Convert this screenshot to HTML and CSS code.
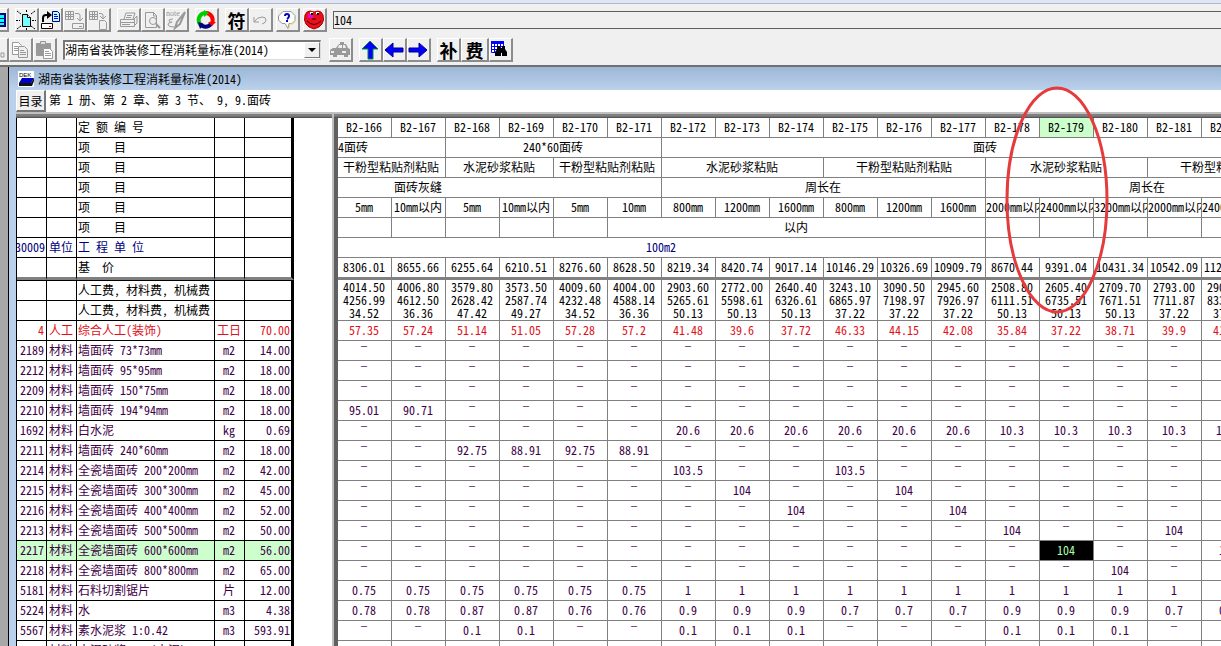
FILE: index.html
```html
<!DOCTYPE html>
<html lang="zh-CN">
  <head>
    <meta charset="UTF-8" />
    <meta name="viewport" content="width=device-width, initial-scale=1.0" />
    <title>湖南省装饰装修工程消耗量标准(2014)</title>
    <link rel="stylesheet" href="styles.css">
  </head>

  <body>
    <div class="menu-edge"></div>
    <div class="toolbars">
      <div class="toolbar">
        <button class="tool cut" aria-label="表格">
          <svg viewBox="0 0 20 20"><path fill="#000080" d="M0 3h18v14H0z"/><path fill="#0ff" d="M0 5h16v3H0zM0 9h16v3H0zM0 13h16v2H0z"/></svg>
        </button>
        <div class="group">
          <button class="tool" aria-label="新建">
            <svg viewBox="0 0 20 20"><path fill="#7ff" stroke="#000" d="M6.500 4.500h5l3 3v9h-8z"/><path fill="#fff" stroke="#000" d="M11.500 4.500v3h3"/><path stroke="#000" stroke-dasharray="2 1" d="M1 1l4 3M19 1l-4 3M1 19l4-3M19 19l-4-3M0 10.500h4M16 10.500h4M10.500 0v3M10.500 18v2"/></svg>
          </button>
          <button class="tool" aria-label="打开">
            <svg viewBox="0 0 20 20"><path fill="none" stroke="#000" stroke-width="2" d="M3 12V8q0-3 3-3h2"/><path d="M7 1l5 4-5 4z"/><path fill="#bff" stroke="#000080" d="M12.500 1.500h5l2 2v8h-7z"/><path stroke="#00f" d="M14 4.500h3M14 6.500h4M14 8.500h4"/><path fill="#fff" stroke="#000" d="M1.500 13.500h11v5h-11z"/><path stroke="#f00" d="M9 16.500h2"/></svg>
          </button>
          <button class="tool off" aria-label="导入">
            <svg viewBox="0 0 20 20"><path d="M1.500 1.500h8v8h-8zM1 4.500h8M1 6.500h8M4.500 1v8M6.500 1v8M11 3.500h3q2 0 2 2v5M13 8l3 3 3-3M8.500 13.500h11v5h-11zM15 16.500h3"/></svg>
          </button>
          <button class="tool off" aria-label="导出">
            <svg viewBox="0 0 20 20"><path d="M1.500 1.500h8v8h-8zM1 4.500h8M1 6.500h8M4.500 1v8M6.500 1v8M11 3.500h2q2 0 2 2v3M12 6l3 3 3-3M11.500 10.500h5l2 2v7h-7z"/></svg>
          </button>
        </div>
        <div class="group">
          <button class="tool off" aria-label="打印">
            <svg viewBox="0 0 20 20"><path d="M6 9l2-6h9l-2 6M2.500 9.500h14v7h-14zM2 12.500h14M16 9l3-3v7l-3 3M9 5.500h5M8 7.500h5M4 14.500h8"/></svg>
          </button>
          <button class="tool off" aria-label="预览">
            <svg viewBox="0 0 20 20"><path d="M3.500 2.500h8l3 3v12h-11zM11.500 2v4h3"/><circle cx="11" cy="11" r="3.500"/><path stroke-width="2" d="M14 14l4 4"/></svg>
          </button>
          <button class="tool off" aria-label="备注">
            <svg viewBox="0 0 20 20"><text x="0" y="6" class="note">note</text><path d="M7 9q-5 0-4 2t3 1q-5 1-4 3t6 2"/><path stroke-width="2" d="M19 2l-8 10-2 6 5-4 5-12"/></svg>
          </button>
        </div>
        <div class="group">
          <button class="tool" aria-label="循环">
            <svg viewBox="0 0 20 20"><g fill="none" stroke-width="4"><path stroke="#0c0" d="M4 14A7 7 0 0 1 9 3"/><path stroke="#f00" d="M10 3a7 7 0 0 1 6 10"/><path stroke="#000080" d="M15 14A7 7 0 0 1 4 14"/></g><path fill="#0c0" d="M8 0l5 3-5 4z"/><path fill="#f00" d="M12 12h8l-4 4z"/><path fill="#000080" d="M2 12l6 2-4 5z"/></svg>
          </button>
        </div>
        <div class="group">
          <button class="tool glyph">符</button>
          <button class="tool off" aria-label="撤销">
            <svg viewBox="0 0 20 20"><path d="M4 7v5h5M4 12q3-5 8-5 4 0 4 3t-4 4"/></svg>
          </button>
        </div>
        <div class="group near">
          <button class="tool" aria-label="帮助">
            <svg viewBox="0 0 20 20"><path fill="#fff" stroke="#999" d="M6 1.500h8l4 4v5l-3 3h-3l-1 5-3-5H5L1.500 10V6z"/><path fill="none" stroke="#dd8" d="M19 10l-3 4h-3l-1 4"/><path fill="none" stroke="#00c" stroke-width="2" d="M8 6q0-2 2-2t2 2-2 3M10 10v2"/></svg>
          </button>
          <button class="tool" aria-label="退出">
            <svg viewBox="0 0 20 20"><path fill="#e8101c" stroke="#a00" d="M3 2l3-1 4 1 4-1 3 1 2 3 .500 5-1.500 4-3 3-5 2-5-2-3-3L.500 10 1 5z"/><path fill="#e010d0" d="M4 4h5v4H4z"/><path fill="#fff" d="M6 2h3v2H6zM12 2h3v2h-3z"/><path d="M7 3h2v2H7zM13 3h2v2h-2z"/><path fill="none" stroke="#400" d="M3 11q7 7 14 0M8 9h4"/></svg>
          </button>
        </div>
        <input class="formula" type="text" value="104" aria-label="单元格内容" />
      </div>

      <div class="toolbar">
        <button class="tool off cut" aria-label="剪切">
          <svg viewBox="0 0 20 20"><path d="M4 2l8 11M13 13h3v4h-3z"/></svg>
        </button>
        <div class="group pull">
          <button class="tool off" aria-label="复制">
            <svg viewBox="0 0 20 20"><path fill="#fff" d="M2.500 2.500h6l3 3v9h-9zM4 6.500h4M4 8.500h5M4 10.500h5"/><path fill="#eee" d="M8.500 6.500h6l3 3v8h-9zM10 10.500h4M10 12.500h6M10 14.500h6"/></svg>
          </button>
          <button class="tool off" aria-label="粘贴">
            <svg viewBox="0 0 20 20"><path fill="#999" d="M2.500 3.500h14v12h-14z"/><path fill="#ddd" d="M6.500 1.500h5v3h-5z"/><path fill="#fff" d="M9.500 8.500h6l3 3v7h-9zM11 11.500h4M11 13.500h6M11 15.500h6"/></svg>
          </button>
        </div>
        <div class="combo">
          <select aria-label="标准">
            <option>湖南省装饰装修工程消耗量标准(2014)</option>
          </select>
          <span class="arrow"></span>
        </div>
        <button class="tool off" aria-label="机械">
          <svg viewBox="0 0 20 20"><path class="car" fill="#999" d="M10 2h4v2h2l2 4 2 1v6h-2v2h-4v-2H7v2H3v-2H0v-5l3-2h3l3-4h1z"/><path fill="#eee" class="car" d="M9 5h3v3H8zM13 5h2l1 3h-3zM1 11h3v2H1zM12 11h4v2h-4z"/></svg>
        </button>
        <div class="group">
          <button class="tool" aria-label="上"><svg viewBox="0 0 20 20"><path fill="#00f" stroke="#084" d="M10 1l8 8h-5v10H8V9H2z"/></svg></button>
          <button class="tool" aria-label="左"><svg viewBox="0 0 20 20"><path fill="#00f" stroke="#008" d="M1 10l8-7v5h10v4H9v5z"/></svg></button>
          <button class="tool" aria-label="右"><svg viewBox="0 0 20 20"><path fill="#00f" stroke="#008" d="M19 10l-8-7v5H1v4h10v5z"/></svg></button>
        </div>
        <div class="group">
          <button class="tool glyph">补</button>
          <button class="tool glyph wide">费</button>
          <button class="tool" aria-label="查找">
            <svg viewBox="0 0 20 20"><path fill="#fff" stroke="#00f" d="M1.500 1.500h12v11h-12zM1 6.500h12M1 9.500h12M4.500 3v10M7.500 3v10M10.500 3v10"/><path fill="#00f" d="M1 1h13v3H1z"/><path d="M7 6h3v2h2V6h3v3l2 3v4h-5v-4h-1v4H5v-4l2-3z"/></svg>
          </button>
        </div>
      </div>
    </div>

    <div class="mdi">
      <div class="window">
        <div class="title">
          <svg viewBox="0 0 16 16"><path fill="#fff" d="M0 0h16v16H0z"/><text x="1" y="6" class="dek">DEK</text><path fill="#00c" d="M4 7h12l-3 5H1z"/><path fill="#111" d="M1 12h12l3-5v3l-2 5H1z"/></svg>
          <span>湖南省装饰装修工程消耗量标准(2014)</span>
        </div>
        <div class="path">
          <button class="catalog">目录</button>
          <span>第 1 册、第 2 章、第 3 节、 9, 9.面砖</span>
        </div>
        <div class="panes">
          <div class="left">
            <table class="items">
              <colgroup><col class="c1"><col class="c2"><col class="c3"><col class="c4"><col class="c5"></colgroup>
              <thead></thead>
              <tbody></tbody>
            </table>
          </div>
          <div class="right">
            <table class="quota">
              <thead></thead>
              <tbody></tbody>
            </table>
          </div>
        </div>
      </div>
    </div>

    <svg class="mark" viewBox="0 0 104 228"><ellipse cx="52" cy="114" rx="50" ry="112"/></svg>

    <script src="script.js"></script>
  </body>
</html>
```
FILE: styles.css
```css
* {
  margin: 0;
  padding: 0;
  box-sizing: border-box;
}

body {
  display: flex;
  flex-direction: column;
  height: 100vh;
  overflow: hidden;
  position: relative;
  background: #f0f0f0;
}

body,
button,
input,
select {
  font-family: "Noto Sans Mono CJK SC", "Noto Sans CJK SC", monospace;
  font-size: 12px;
  line-height: 16px;
  color: #000;
}

.menu-edge {
  height: 4px;
  flex: none;
  background: #dfe5f2;
  border-bottom: 1px solid #b0b8cc;
}

.toolbars {
  flex: none;
  height: 63px;
  padding-top: 4px;
  border-bottom: 2px solid #707070;
}

.toolbar {
  display: flex;
  align-items: center;
  gap: 6px;
  height: 24px;
  margin-bottom: 6px;
}

.group {
  display: flex;
}

.near {
  gap: 3px;
  margin-left: -3px;
}

.tool {
  flex: none;
  width: 24px;
  height: 24px;
  background: #f0f0f0;
  border: 1px solid #fff;
  border-right: 2px solid #8c8c8c;
  border-bottom: 2px solid #8c8c8c;
}

.tool svg {
  display: block;
  width: 20px;
  height: 20px;
}

.cut {
  width: 9px;
  border-left: 0;
  overflow: hidden;
}

.cut svg {
  margin-left: -12px;
}

.pull {
  margin-left: -6px;
}

.off path,
.off circle {
  stroke: #999;
}

.off path:not([fill]),
.off circle {
  fill: none;
}

.off .car {
  stroke: none;
}

.note {
  font: 8px "Liberation Serif", serif;
  fill: #999;
}

.glyph {
  font-size: 18px;
  font-weight: bold;
  line-height: 18px;
}

.wide {
  width: 28px;
}

.formula {
  flex: 1;
  align-self: flex-start;
  height: 18px;
  margin-top: 3px;
  padding-bottom: 2px;
  background: #f0f0f0;
  border: 1px solid #606060;
  border-right: 0;
}

.combo {
  position: relative;
  width: 258px;
  height: 20px;
  margin-right: 2px;
}

.combo select {
  width: 100%;
  height: 20px;
  padding-bottom: 2px;
  appearance: none;
  background: #fff;
  border: 2px solid #777;
  border-right: 1px solid #ddd;
  border-bottom: 1px solid #ddd;
  border-radius: 0;
}

.arrow {
  position: absolute;
  top: 2px;
  right: 1px;
  width: 16px;
  height: 16px;
  background: #f0f0f0;
  border: 1px solid #fff;
  border-right-color: #777;
  border-bottom-color: #777;
  pointer-events: none;
}

.arrow::after {
  content: "";
  display: block;
  margin: 5px 3px;
  border: 4px solid transparent;
  border-top-color: #000;
  border-bottom: 0;
}

.mdi {
  flex: 1;
  min-height: 0;
  display: flex;
  padding-left: 8px;
  background: #a8a8a8;
}

.window {
  flex: 1;
  min-width: 0;
  display: flex;
  flex-direction: column;
  background: #fff;
  border-left: 1px solid #000;
}

.title {
  flex: none;
  display: flex;
  align-items: center;
  gap: 4px;
  height: 23px;
  padding-left: 9px;
  background: linear-gradient(#9cb7d6, #bbd1ec);
}

.title svg {
  width: 16px;
  height: 16px;
}

.dek {
  font: 6px "Liberation Sans", sans-serif;
}

.path,
.panes {
  border-left: 7px solid #b9d1ea;
}

.path {
  flex: none;
  display: flex;
  align-items: center;
  gap: 3px;
  height: 22px;
  white-space: pre;
}

.path span {
  padding-bottom: 2px;
}

.catalog {
  width: 30px;
  height: 22px;
  background: #f0f0f0;
  border: 1px solid #fff;
  border-right: 2px solid #777;
  border-bottom: 2px solid #777;
}

.panes {
  flex: 1;
  min-height: 0;
  display: flex;
}

.left,
.right {
  overflow: hidden;
  border-top: 2px solid #c0c0c0;
}

.left::before,
.right::before {
  content: "";
  display: block;
  height: 4px;
  background: linear-gradient(#808080 50%, #484848);
}

.left {
  flex: none;
  width: 316px;
}

.right {
  flex: 1;
  border-left: 2px solid #c0c0c0;
}

table {
  table-layout: fixed;
  border-collapse: separate;
  border-spacing: 0;
}

th,
td {
  height: 20px;
  padding: 0 1px 2px 0;
  line-height: 17px;
  font-weight: normal;
  text-align: center;
  white-space: pre;
  overflow: hidden;
  border-right: 1px solid #808080;
  border-bottom: 1px solid #808080;
}

thead tr:last-child th {
  height: 22px;
  border-bottom: 3px solid #808080;
}

tbody {
  color: #400048;
}

.items {
  width: 278px;
  border-left: 1px solid #000;
}

.c1,
.c2,
.c4 {
  width: 30px;
}

.c3 {
  width: 138px;
}

.c5 {
  width: 49px;
}

.items th,
.items td {
  border-color: #000;
}

.items thead tr:last-child th {
  border-bottom-color: #808080;
}

.items tbody tr:first-child td {
  height: 21px;
  border-top: 1px solid #000;
}

.items th:nth-child(3),
.items td:nth-child(3) {
  padding-left: 1px;
  text-align: left;
}

/* long codes lose their first digits, not the last */
.items th:first-child,
.items td:first-child {
  padding-right: 2px;
  text-align: right;
  direction: rtl;
}

.items th:last-child,
.items td:last-child {
  text-align: right;
  border-right: 3px solid #000;
}

.quota {
  width: 976px;
  border-left: 4px solid #606060;
}

.quota .fees td {
  height: 41px;
  padding-bottom: 1px;
  line-height: 13px;
}

.quota .dash {
  font-family: "Liberation Serif", serif;
  line-height: 8px;
  vertical-align: top;
}

.fees {
  color: #000;
}

.labor {
  color: #e01020;
}

.unit {
  color: #000080;
}

.quota .from-left {
  text-align: left;
}

.quota .joint {
  padding-left: 56px;
  text-align: left;
}

.picked td,
.quota .picked-col {
  background: #ccffcc;
}

.quota .current {
  color: #aaffaa;
  background: #000;
}

.mark {
  position: absolute;
  top: 86px;
  left: 1005px;
  width: 104px;
  height: 228px;
  pointer-events: none;
}

.mark ellipse {
  fill: none;
  stroke: #e43c3c;
  stroke-width: 3px;
}
```
FILE: script.js
```js
var itemHead = document.querySelector(".items thead");
var itemBody = document.querySelector(".items tbody");
var quotaHead = document.querySelector(".quota thead");
var quotaBody = document.querySelector(".quota tbody");

var COLS = 18;

// left header: code, type, name
var titles = [
  ["", "", "定 额 编 号"],
  ["", "", "项    目"],
  ["", "", "项    目"],
  ["", "", "项    目"],
  ["", "", "项    目"],
  ["", "", "项    目"],
  ["30009", "单位", "工 程 单 位", "unit"],
  ["", "", "基  价"],
];

// right header: [text, colspan, class]
var heads = [
  [],
  [["4面砖", 2, "from-left"], ["240*60面砖", 4], ["面砖", 12]],
  [["干粉型粘贴剂粘贴", 2], ["水泥砂浆粘贴", 2], ["干粉型粘贴剂粘贴", 2], ["水泥砂浆粘贴", 3],
   ["干粉型粘贴剂粘贴", 3], ["水泥砂浆粘贴", 3], ["干粉型粘贴剂粘贴", 3]],
  [["面砖灰缝", 6, "joint"], ["周长在", 6], ["周长在", 6]],
  ["5mm", "10mm以内", "5mm", "10mm以内", "5mm", "10mm", "800mm", "1200mm", "1600mm", "800mm", "1200mm",
   "1600mm", "2000mm以内", "2400mm以内", "3200mm以内", "2000mm以内", "2400mm以内", ""],
  ["", "", "", "", "", ["以内", 7], "", "", "", "", "", ""],
  [["100m2", 12, "unit"], ["", 6]],
  ["8306.01", "8655.66", "6255.64", "6210.51", "8276.60", "8628.50", "8219.34", "8420.74", "9017.14",
   "10146.29", "10326.69", "10909.79", "8670.44", "9391.04", "10431.34", "10542.09", "11272.81", ""],
];
for (var n = 166; n < 166 + COLS; n++) {
  heads[0].push(["B2-" + n, 1, n == 179 ? "picked-col" : ""]);
}

var fees = [
  ["4014.50", "4256.99", "34.52"], ["4006.80", "4612.50", "36.36"], ["3579.80", "2628.42", "47.42"],
  ["3573.50", "2587.74", "49.27"], ["4009.60", "4232.48", "34.52"], ["4004.00", "4588.14", "36.36"],
  ["2903.60", "5265.61", "50.13"], ["2772.00", "5598.61", "50.13"], ["2640.40", "6326.61", "50.13"],
  ["3243.10", "6865.97", "37.22"], ["3090.50", "7198.97", "37.22"], ["2945.60", "7926.97", "37.22"],
  ["2508.80", "6111.51", "50.13"], ["2605.40", "6735.51", "50.13"], ["2709.70", "7671.51", "50.13"],
  ["2793.00", "7711.87", "37.22"], ["2900.80", "8334.79", "37.22"], [],
];

// code, type, name, unit, price, values ("–" when not listed)
var items = [
  ["4", "人工", "综合人工(装饰)", "工日", "70.00", [57.35, 57.24, 51.14, 51.05, 57.28, 57.2, 41.48, 39.6,
    37.72, 46.33, 44.15, 42.08, 35.84, 37.22, 38.71, 39.9, 41.44]],
  ["2189", "材料", "墙面砖 73*73mm", "m2", "14.00", []],
  ["2212", "材料", "墙面砖 95*95mm", "m2", "18.00", []],
  ["2209", "材料", "墙面砖 150*75mm", "m2", "18.00", []],
  ["2210", "材料", "墙面砖 194*94mm", "m2", "18.00", { 0: 95.01, 1: 90.71 }],
  ["1692", "材料", "白水泥", "kg", "0.69", { 6: 20.6, 7: 20.6, 8: 20.6, 9: 20.6, 10: 20.6, 11: 20.6,
    12: 10.3, 13: 10.3, 14: 10.3, 15: 10.3, 16: 10.3 }],
  ["2211", "材料", "墙面砖 240*60mm", "m2", "18.00", { 2: 92.75, 3: 88.91, 4: 92.75, 5: 88.91 }],
  ["2214", "材料", "全瓷墙面砖 200*200mm", "m2", "42.00", { 6: 103.5, 9: 103.5 }],
  ["2215", "材料", "全瓷墙面砖 300*300mm", "m2", "45.00", { 7: 104, 10: 104 }],
  ["2216", "材料", "全瓷墙面砖 400*400mm", "m2", "52.00", { 8: 104, 11: 104 }],
  ["2213", "材料", "全瓷墙面砖 500*500mm", "m2", "50.00", { 12: 104, 15: 104 }],
  ["2217", "材料", "全瓷墙面砖 600*600mm", "m2", "56.00", { 13: 104, 16: 104 }],
  ["2218", "材料", "全瓷墙面砖 800*800mm", "m2", "65.00", { 14: 104 }],
  ["5181", "材料", "石料切割锯片", "片", "12.00", [0.75, 0.75, 0.75, 0.75, 0.75, 0.75, 1, 1, 1, 1, 1, 1,
    1, 1, 1, 1, 1]],
  ["5224", "材料", "水", "m3", "4.38", [0.78, 0.78, 0.87, 0.87, 0.76, 0.76, 0.9, 0.9, 0.9, 0.7, 0.7, 0.7,
    0.9, 0.9, 0.9, 0.7, 0.7]],
  ["5567", "材料", "素水泥浆 1:0.42", "m3", "593.91", { 2: 0.1, 3: 0.1, 6: 0.1, 7: 0.1, 8: 0.1, 12: 0.1,
    13: 0.1, 14: 0.1 }],
  ["", "材料", "水泥砂浆 1:1(水泥)", "", "", []],
];

function cell(tag, text, cls, span) {
  return "<" + tag + (cls ? ' class="' + cls + '"' : "") +
    (span > 1 ? ' colspan="' + span + '"' : "") + ">" + text + "</" + tag + ">";
}

var html = "";
titles.forEach(function (t) {
  html += '<tr class="' + (t[3] || "") + '">' + cell("th", t[0]) + cell("th", t[1]) +
    cell("th", t[2]) + cell("th", "") + cell("th", "") + "</tr>";
});
itemHead.innerHTML = html;

html = "";
heads.forEach(function (row) {
  html += "<tr>";
  row.forEach(function (h) {
    html += typeof h == "string" ? cell("th", h) : cell("th", h[0], h[2], h[1]);
  });
  html += "</tr>";
});
quotaHead.innerHTML = html;

var left = "";
for (var i = 0; i < 2; i++) {
  left += '<tr class="fees">' + cell("td", "") + cell("td", "") +
    cell("td", "人工费, 材料费, 机械费") + cell("td", "") + cell("td", "") + "</tr>";
}
var right = '<tr class="fees">';
fees.forEach(function (f) {
  right += cell("td", f.join("<br>"));
});
right += "</tr>";

items.forEach(function (item) {
  var cls = item[0] == "4" ? "labor" : item[0] == "2217" ? "picked" : "";
  left += '<tr class="' + cls + '">';
  for (var i = 0; i < 5; i++) {
    left += cell("td", item[i]);
  }
  left += "</tr>";

  right += '<tr class="' + (cls == "labor" ? cls : "") + '">';
  for (var c = 0; c < COLS; c++) {
    var v = item[5][c];
    if (v === undefined) {
      right += cell("td", "–", "dash");
    } else {
      right += cell("td", v, cls == "picked" && c == 13 ? "current" : "");
    }
  }
  right += "</tr>";
});
itemBody.innerHTML = left;
quotaBody.innerHTML = right;
```
